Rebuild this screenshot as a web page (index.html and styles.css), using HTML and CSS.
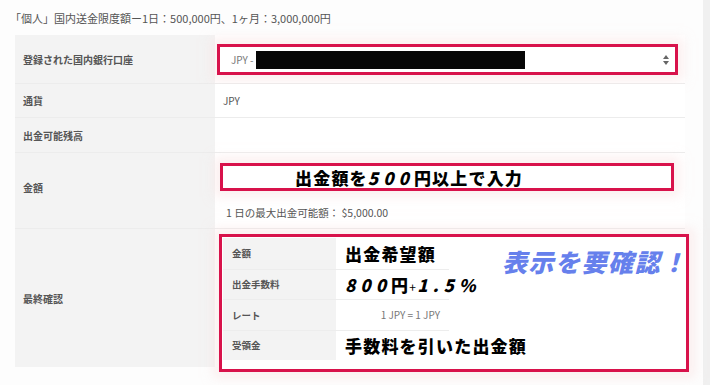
FILE: index.html
```html
<!DOCTYPE html>
<html lang="ja">
<head>
  <meta charset="UTF-8" />
  <meta name="viewport" content="width=device-width, initial-scale=1.0" />
  <title>出金</title>
  <link rel="stylesheet" href="styles.css">
</head>
<body>
  <div class="page">
    <div class="content">
      <p class="limit">「個人」国内送金限度額ー1日：500,000円、1ヶ月：3,000,000円</p>

      <div class="form">
        <!-- 口座 -->
        <div class="row row-account">
          <div class="label">登録された国内銀行口座</div>
          <div class="value">
            <div class="select mark">
              <span class="select-text">JPY - </span><span class="redact"></span>
              <svg class="arrows" width="6" height="10" viewBox="0 0 6 10">
                <path d="M3 0 L6 4 L0 4 Z" fill="#666" />
                <path d="M0 6 L6 6 L3 10 Z" fill="#666" />
              </svg>
            </div>
          </div>
        </div>

        <div class="row row-currency">
          <div class="label">通貨</div>
          <div class="value plain">JPY</div>
        </div>

        <div class="row row-balance">
          <div class="label">出金可能残高</div>
          <div class="value plain"></div>
        </div>

        <!-- 金額 -->
        <div class="row row-amount">
          <div class="label">金額</div>
          <div class="value">
            <div class="input mark">
              <span class="big">出金額を<i class="num">500</i>円以上で入力</span>
            </div>
            <div class="hint">1 日の最大出金可能額：&nbsp;$5,000.00</div>
          </div>
        </div>

        <!-- 最終確認 -->
        <div class="row row-confirm">
          <div class="label">最終確認</div>
          <div class="value">
            <div class="confirm mark">
              <div class="sub">
                <div class="sub-row">
                  <div class="sub-label">金額</div>
                  <div class="sub-value"><span class="big">出金希望額</span></div>
                </div>
                <div class="sub-row">
                  <div class="sub-label">出金手数料</div>
                  <div class="sub-value"><span class="big"><i class="num">800</i>円<small>+</small><i class="num">1.5%</i></span></div>
                </div>
                <div class="sub-row">
                  <div class="sub-label">レート</div>
                  <div class="sub-value rate">1 JPY = 1 JPY</div>
                </div>
                <div class="sub-row">
                  <div class="sub-label">受領金</div>
                  <div class="sub-value"><span class="big">手数料を引いた出金額</span></div>
                </div>
              </div>
              <div class="note">表示を要確認！</div>
            </div>
          </div>
        </div>
      </div>
    </div>
    <div class="scrollbar"></div>
  </div>
</body>
</html>
```

FILE: styles.css
```css
* {
  box-sizing: border-box;
  margin: 0;
  padding: 0;
}

body {
  font-family: "Noto Sans CJK JP", "Noto Sans", sans-serif;
  background: #fdfdfd;
  color: #444;
}

.page {
  display: flex;
  width: 710px;
  height: 385px;
  overflow: hidden;
}

.content {
  flex: 1;
  padding: 11px 0 0 15px;
}

.scrollbar {
  width: 7px;
  background: #f0f0f0;
}

.limit {
  font-size: 11px;
  line-height: 14px;
  color: #555;
  margin-left: -5px;
  margin-bottom: 10px;
}

/* --- FORM TABLE --- */
.form {
  width: 670px;
}

.row {
  display: flex;
  border-top: 1px solid #ececec;
}

.row:first-child {
  border-top: none;
}

.label {
  width: 200px;
  flex-shrink: 0;
  background: #f3f3f3;
  display: flex;
  align-items: center;
  padding-left: 8px;
  font-size: 10px;
  font-weight: 700;
  color: #555;
}

.value {
  flex: 1;
  background: #fff;
}

.value.plain {
  display: flex;
  align-items: center;
  padding-left: 8px;
  font-size: 10px;
  color: #555;
}

.row-account { height: 48px; }
.row-currency { height: 34px; }
.row-balance { height: 35px; }
.row-amount { height: 76px; }
.row-confirm { height: 139px; }

.row-amount .label { padding-bottom: 6px; }

.mark {
  border: 3px solid #d8124b;
  box-shadow: 0 0 10px 6px rgba(250, 228, 228, 0.55);
}

/* select */
.row-account .value {
  padding: 9px 7px 0 2px;
}

.select {
  height: 31px;
  display: flex;
  align-items: center;
  padding: 0 6px 0 11px;
  background: #fff;
}

.select-text {
  font-size: 10px;
  color: #777;
  white-space: pre;
}

.redact {
  width: 269px;
  height: 18px;
  background: #060606;
}

.arrows {
  margin-left: auto;
}

/* amount */
.row-amount .value {
  padding: 10px 11px 0 5px;
}

.input {
  height: 28px;
  display: flex;
  align-items: center;
  padding-left: 72px;
  background: #fff;
}

.big {
  font-size: 17px;
  font-weight: 900;
  color: #000;
  white-space: nowrap;
  letter-spacing: 1.2px;
}

.num {
  font-style: italic;
  letter-spacing: 5px;
}

.big small {
  font-size: 12px;
  font-weight: 400;
}

.hint {
  margin-top: 15px;
  padding-left: 6px;
  font-size: 10.5px;
  line-height: 14px;
  color: #555;
}

/* final confirmation */
.row-confirm .value {
  padding: 5px 0 0 4px;
}

.confirm {
  position: relative;
  width: 470px;
  height: 138px;
  padding: 1px 0 0 1px;
  background: #fff;
}

.sub {
  width: 226px;
}

.sub-row {
  display: flex;
  height: 30.5px;
  border-top: 1px solid #ededed;
}

.sub-row:first-child {
  border-top: none;
}

.sub-label {
  width: 113px;
  flex-shrink: 0;
  background: #f3f3f3;
  display: flex;
  align-items: center;
  padding-left: 9px;
  font-size: 9.5px;
  font-weight: 700;
  color: #555;
}

.sub-value {
  flex: 1;
  display: flex;
  align-items: center;
  padding-left: 9px;
}

.sub-value.rate {
  justify-content: flex-end;
  padding-right: 9px;
  font-size: 10px;
  color: #777;
}

.note {
  position: absolute;
  top: 6px;
  left: 280px;
  font-size: 25px;
  font-weight: 900;
  font-style: italic;
  color: #6680ec;
  white-space: nowrap;
  letter-spacing: 1.5px;
}
```
